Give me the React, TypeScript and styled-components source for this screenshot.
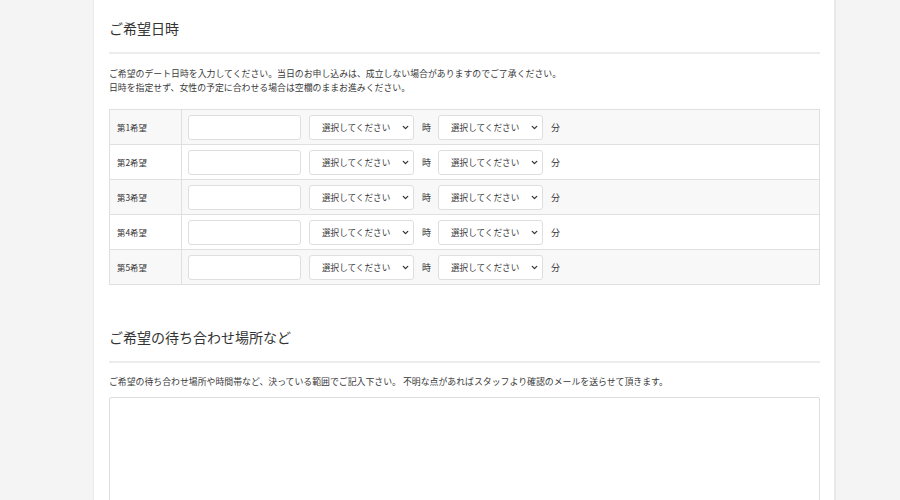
import React from 'react';
import styled, {createGlobalStyle} from 'styled-components';
import {ChevronDown} from 'lucide-react';

const GlobalStyle = createGlobalStyle`
  html, body {
    margin: 0;
    padding: 0;
    background: #f4f4f4;
  }
  body {
    font-family: "Noto Sans CJK JP", "Noto Sans", sans-serif;
    color: #333;
  }
`;

const Page = styled.div`
  height: 500px;
  overflow: hidden;
`;

const Panel = styled.div`
  box-sizing: border-box;
  width: 743px;
  margin-left: 93px;
  height: 100%;
  background: #fff;
  border-left: 1px solid #ebebeb;
  border-right: 2px solid #e8e8e8;
  padding: 16px 14px 0 15px;
`;

const Section = styled.section<{$gap?: number}>`
  margin-top: ${p => p.$gap ?? 0}px;
`;

const Heading = styled.h2`
  margin: 0;
  font-size: 14px;
  line-height: 24px;
  font-weight: 400;
  color: #333;
  padding-bottom: 12px;
  border-bottom: 2px solid #ececec;
`;

const Description = styled.p<{$top: number; $bottom: number}>`
  margin: ${p => p.$top}px 0 ${p => p.$bottom}px;
  font-size: 8.9px;
  line-height: 14px;
  color: #3a3a3a;
`;

const Table = styled.table`
  width: 100%;
  border-collapse: collapse;
  border: 1px solid #e0e0e0;
`;

const Row = styled.tr<{$odd: boolean}>`
  height: 35px;
  background: ${p => (p.$odd ? '#f8f8f8' : '#fff')};
  border-bottom: 1px solid #e0e0e0;
`;

const Label = styled.th`
  box-sizing: border-box;
  width: 72px;
  padding: 0 7px;
  text-align: left;
  font-size: 8.4px;
  font-weight: 400;
  color: #333;
  border-right: 1px solid #e0e0e0;
`;

const Cell = styled.td`
  padding: 0 7px;
`;

const Fields = styled.div`
  display: flex;
  align-items: center;
`;

const TextInput = styled.input`
  display: block;
  box-sizing: border-box;
  width: 113px;
  height: 25px;
  border: 1px solid #dedede;
  border-radius: 3px;
  background: #fff;
  margin: 0 8px 0 -1px;
`;

const SelectWrap = styled.div`
  position: relative;
  width: 105px;
  height: 25px;
`;

const Select = styled.select`
  display: block;
  appearance: none;
  box-sizing: border-box;
  width: 100%;
  height: 100%;
  margin: 0;
  border: 1px solid #dedede;
  border-radius: 3px;
  background: #fff;
  padding: 0 0 0 12px;
  font-family: "Noto Sans CJK JP", sans-serif;
  font-size: 8.6px;
  color: #3a3a3a;
`;

const Chevron = styled(ChevronDown)`
  position: absolute;
  right: 4px;
  top: 8px;
  width: 9px;
  height: 9px;
  color: #333;
  pointer-events: none;
`;

const Unit = styled.span`
  font-size: 9px;
  color: #333;
  margin: 0 7px 0 8px;
`;

const TextArea = styled.textarea`
  display: block;
  box-sizing: border-box;
  width: 100%;
  height: 160px;
  margin: 0;
  border: 1px solid #dedede;
  border-radius: 2px;
  background: #fff;
  resize: none;
`;

const TimeSelect: React.FC = () => (
  <SelectWrap>
    <Select defaultValue="">
      <option value="">選択してください</option>
    </Select>
    <Chevron strokeWidth={3.5} />
  </SelectWrap>
);

const App: React.FC = () => {
  const rows = [1, 2, 3, 4, 5];
  return (
    <Page>
      <GlobalStyle />
      <Panel>
        <Section>
          <Heading>ご希望日時</Heading>
          <Description $top={13} $bottom={14}>
            ご希望のデート日時を入力してください。当日のお申し込みは、成立しない場合がありますのでご了承ください。
            <br />
            日時を指定せず、女性の予定に合わせる場合は空欄のままお進みください。
          </Description>
          <Table>
            <tbody>
              {rows.map(n => (
                <Row key={n} $odd={n % 2 === 1}>
                  <Label>第{n}希望</Label>
                  <Cell>
                    <Fields>
                      <TextInput type="text" />
                      <TimeSelect />
                      <Unit>時</Unit>
                      <TimeSelect />
                      <Unit>分</Unit>
                    </Fields>
                  </Cell>
                </Row>
              ))}
            </tbody>
          </Table>
        </Section>
        <Section $gap={40}>
          <Heading>ご希望の待ち合わせ場所など</Heading>
          <Description $top={12} $bottom={8}>
            ご希望の待ち合わせ場所や時間帯など、決っている範囲でご記入下さい。 不明な点があればスタッフより確認のメールを送らせて頂きます。
          </Description>
          <TextArea />
        </Section>
      </Panel>
    </Page>
  );
};

export default App;
